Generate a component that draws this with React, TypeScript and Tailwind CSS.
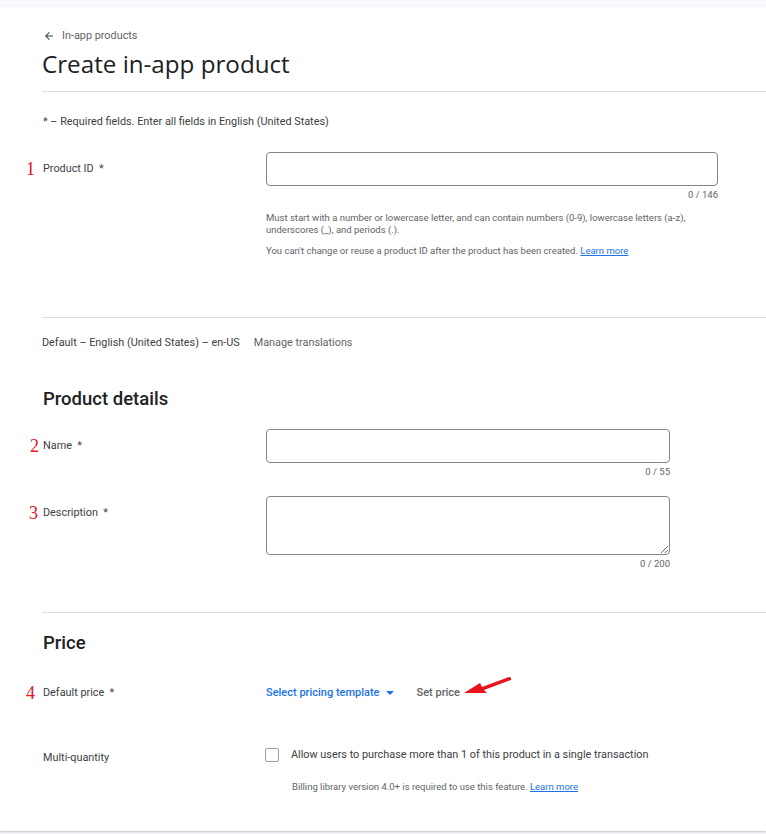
import { ReactNode } from 'react';

const font = { fontFamily: 'Roboto, "Liberation Sans", sans-serif' };
const heading = { fontFamily: '"Open Sans", Roboto, sans-serif' };

function Mark({ n, left }: { n: string; left: string }) {
  return (
    <span
      className={`absolute ${left} top-1/2 -translate-y-1/2 text-[18px] leading-none text-[#e8131b]`}
      style={{ fontFamily: '"Liberation Serif", serif' }}
    >
      {n}
    </span>
  );
}

function Label({ children, mark }: { children: ReactNode; mark?: ReactNode }) {
  return (
    <div className="relative w-[224px] shrink-0 pt-[9px] text-[10.85px] leading-4 text-[#3c4043]">
      <span className="relative inline-block">
        {mark}
        {children}
      </span>
    </div>
  );
}

function Counter({ text }: { text: string }) {
  return <div className="mt-[3px] text-right text-[9.5px] leading-3 text-[#5f6368]">{text}</div>;
}

function Divider({ className = '' }: { className?: string }) {
  return <div className={`h-px bg-[#dadce0] ${className}`} />;
}

export default function App() {
  return (
    <div className="min-h-[834px] bg-[#f8f9fd]" style={font}>
      <div className="h-[7px]" />
      <div className="bg-white pl-[42px] pb-[38px] shadow-[0_1px_2px_rgba(60,64,67,0.3)]">
        <div className="pt-[21px] flex items-center gap-[7px] text-[10.85px] leading-4 text-[#5f6368]">
          <svg width="12" height="12" viewBox="0 0 24 24" className="ml-[1px]">
            <path d="M20 11H7.83l5.59-5.59L12 4l-8 8 8 8 1.41-1.41L7.83 13H20v-2z" fill="#3c4043" />
          </svg>
          <span>In-app products</span>
        </div>
        <h1 className="mt-[4px] text-[24.2px] leading-8 text-[#202124]" style={heading}>
          Create in-app product
        </h1>
        <Divider className="mt-[11px]" />

        <p className="mt-[22px] pl-px text-[10.85px] leading-4 text-[#3c4043]">
          * – Required fields. Enter all fields in English (United States)
        </p>

        <div className="mt-[22px] flex">
          <Label mark={<Mark n="1" left="-left-[16px]" />}>
            <span className="pl-px">Product ID&nbsp; *</span>
          </Label>
          <div className="w-[452px]">
            <div className="h-[34px] rounded-[4px] border border-[#80868b]" />
            <Counter text="0 / 146" />
            <p className="mt-[11px] text-[9.5px] leading-3 text-[#5f6368]">
              Must start with a number or lowercase letter, and can contain numbers (0-9), lowercase letters (a-z),
              underscores (_), and periods (.).
            </p>
            <p className="mt-[9px] text-[9.5px] leading-3 text-[#5f6368]">
              You can't change or reuse a product ID after the product has been created.{' '}
              <span className="text-[#1a73e8] underline">Learn more</span>
            </p>
          </div>
        </div>

        <Divider className="mt-[60px]" />

        <div className="mt-[17px] flex items-center text-[10.85px] leading-4">
          <span className="text-[#3c4043]">Default – English (United States) – en-US</span>
          <span className="ml-[14px] text-[#5f6368]">Manage translations</span>
        </div>

        <h2 className="mt-[36px] pl-px text-[18.5px] leading-6 font-medium text-[#202124]">Product details</h2>

        <div className="mt-[18px] flex">
          <Label mark={<Mark n="2" left="-left-[12px]" />}>
            <span className="pl-px">Name&nbsp; *</span>
          </Label>
          <div className="w-[404px]">
            <div className="h-[34px] rounded-[4px] border border-[#80868b]" />
            <Counter text="0 / 55" />
          </div>
        </div>

        <div className="mt-[18px] flex">
          <Label mark={<Mark n="3" left="-left-[13px]" />}>
            <span className="pl-px">Description&nbsp; *</span>
          </Label>
          <div className="w-[404px]">
            <textarea className="block h-[59px] w-full rounded-[4px] border border-[#80868b] outline-none" />
            <Counter text="0 / 200" />
          </div>
        </div>

        <Divider className="mt-[42px]" />

        <h2 className="mt-[18px] pl-px text-[18.5px] leading-6 font-medium text-[#202124]">Price</h2>

        <div className="mt-[30px] flex items-center">
          <div className="relative w-[224px] shrink-0 text-[10.85px] leading-4 text-[#3c4043]">
            <span className="relative inline-block pl-px">
              <Mark n="4" left="-left-[16px]" />
              Default price&nbsp; *
            </span>
          </div>
          <div className="flex items-center text-[11px] leading-4 font-medium">
            <span className="text-[#1a73e8]">Select pricing template</span>
            <svg width="10" height="10" viewBox="0 0 10 10" className="ml-[5px]">
              <path d="M1 3h8L5 7z" fill="#1a73e8" />
            </svg>
            <span className="ml-[22px] text-[#5f6368]">Set price</span>
            <svg width="52" height="24" viewBox="0 0 52 24" className="-mt-[14px] ml-[2px]">
              <path d="M2 19 L18 9 L20 13 L47 3 Q50 3 49 6 L22 16 L25 19 Z" fill="#e8131b" />
            </svg>
          </div>
        </div>

        <div className="mt-[46px] flex">
          <div className="w-[224px] shrink-0 pt-[3px] pl-px text-[10.85px] leading-4 text-[#3c4043]">Multi-quantity</div>
          <div>
            <div className="flex items-center">
              <span className="-ml-px h-[14px] w-[14px] rounded-[2px] border border-[#9aa0a6]" />
              <span className="ml-[12px] text-[10.85px] leading-4 text-[#3c4043]">
                Allow users to purchase more than 1 of this product in a single transaction
              </span>
            </div>
            <p className="mt-[18px] pl-[26px] text-[9.5px] leading-3 text-[#5f6368]">
              Billing library version 4.0+ is required to use this feature.{' '}
              <span className="text-[#1a73e8] underline">Learn more</span>
            </p>
          </div>
        </div>
      </div>
    </div>
  );
}
